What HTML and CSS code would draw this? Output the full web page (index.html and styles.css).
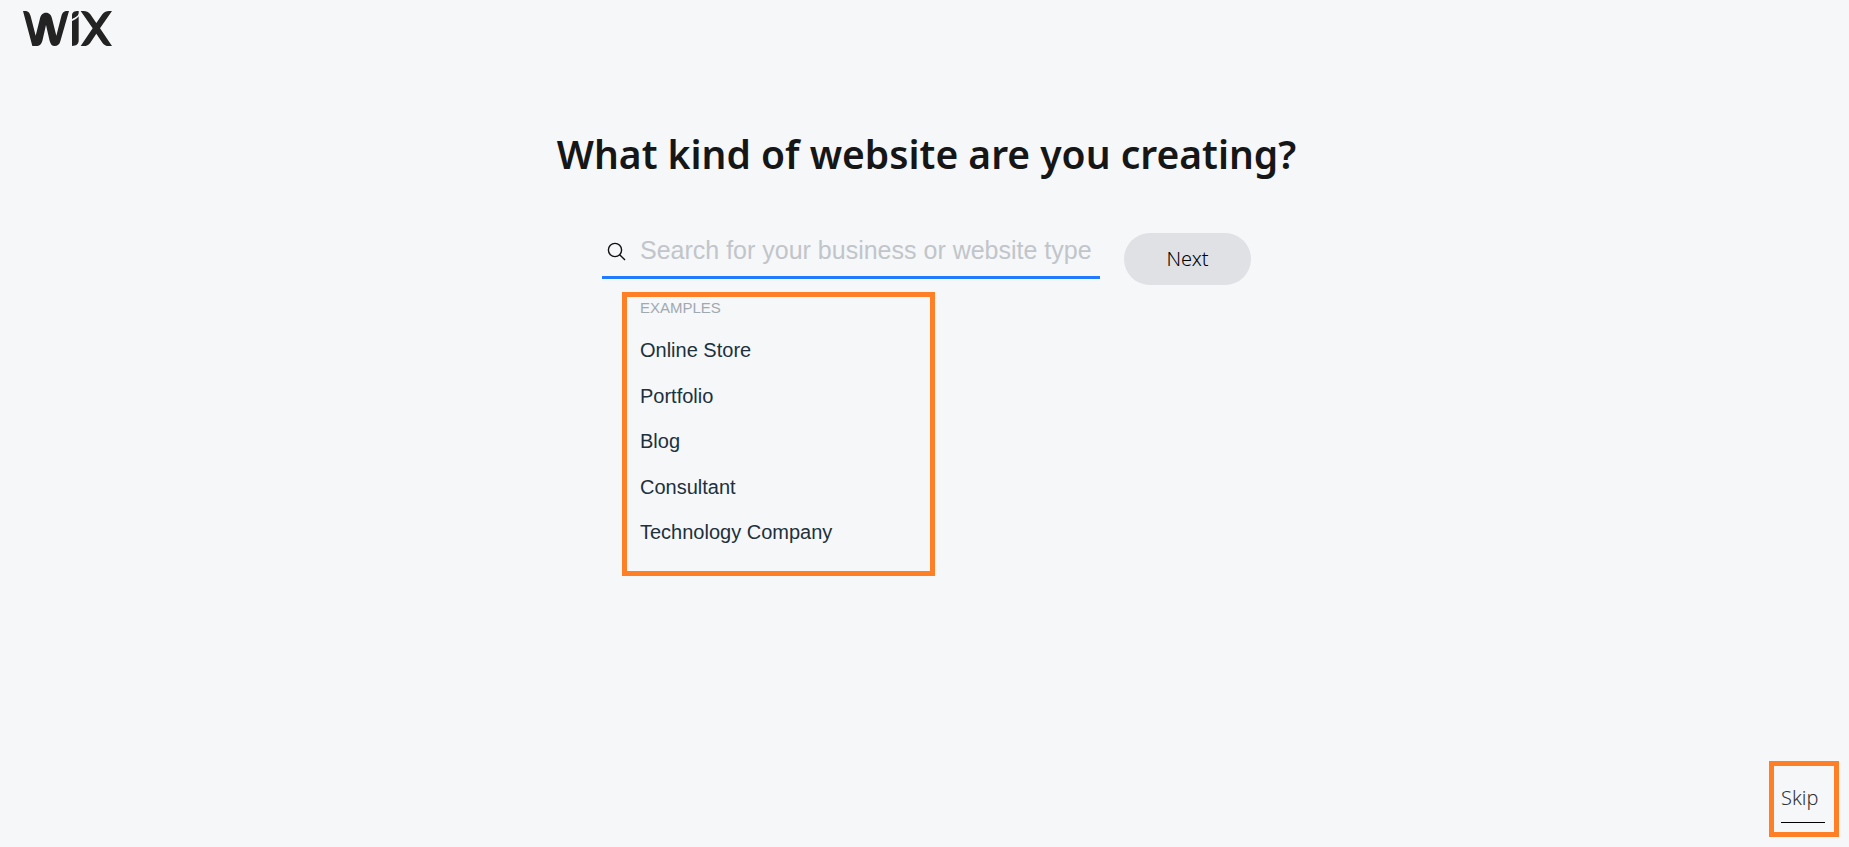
FILE: index.html
```
<!DOCTYPE html>
<html lang="en">
<head>
    <meta charset="UTF-8">
    <meta name="viewport" content="width=device-width, initial-scale=1.0">
    <title>What kind of website are you creating?</title>
    <link rel="stylesheet" href="styles.css">
</head>
<body>

<header class="header">
    <a href="#" class="logo" aria-label="Wix">
        <svg viewBox="0 0 267 105" width="89" height="35" fill="#242323">
            <path d="M0 0H5C16 0 20 5 23 16L38 74L50 26C53 11 59 5 69 5C79 5 85 11 88 26L100 74L115 16C118 5 122 0 133 0H138L112 91C109 101 104 105 95 105C86 105 83 99 80 90L69 42L58 90C55 99 51 104 43 105H28Z"/>
            <path d="M147 25V14C147 4 153 0 167 0C168 11 164 15 157 19C152 22 149 23 147 25Z"/>
            <path d="M147 30C156 27 162 23 167 16V88C167 100 160 105 147 105Z"/>
            <path d="M173 0H182C190 0 196 2 202 10L220 36L238 10C244 2 250 0 258 0H267L231 52L267 105H257C249 105 243 102 238 95L220 68L202 95C197 102 191 105 183 105H173L209 52Z"/>
        </svg>
    </a>
</header>

<main class="main">
    <h1 class="title">What kind of website are you creating?</h1>

    <form class="search-form">
        <div class="search-field">
            <label for="search" class="search-label" aria-label="Website type">
                <svg viewBox="0 0 20 20" width="20" height="20" fill="none" stroke="#111" stroke-width="1.4">
                    <circle cx="8" cy="8" r="6.6"/>
                    <path d="M12.7 12.7L18 18"/>
                </svg>
            </label>
            <input type="text" id="search" class="search-input" placeholder="Search for your business or website type">
        </div>
        <button type="button" class="next-button">Next</button>
    </form>

    <section class="examples">
        <h2 class="examples-title">EXAMPLES</h2>
        <ul class="examples-list">
            <li><a href="#">Online Store</a></li>
            <li><a href="#">Portfolio</a></li>
            <li><a href="#">Blog</a></li>
            <li><a href="#">Consultant</a></li>
            <li><a href="#">Technology Company</a></li>
        </ul>
    </section>
</main>

<footer class="footer">
    <div class="skip-box">
        <a href="#" class="skip-link">Skip</a>
    </div>
</footer>

</body>
</html>
```
FILE: styles.css
```
* {
    box-sizing: border-box;
}
body {
    margin: 0;
    min-height: 100vh;
    display: flex;
    flex-direction: column;
    background-color: #f5f7f9;
    color: #161616;
    font-family: "Liberation Sans", Arial, sans-serif;
}
.header {
    padding: 11px 23px 0;
}
.logo,
.logo svg {
    display: block;
    width: 89px;
}
.main {
    flex: 1;
    display: flex;
    flex-direction: column;
    align-items: center;
    padding: 80px 0 20px 4px;
}
.title {
    margin: 0;
    font-family: "Noto Sans", sans-serif;
    font-size: 39px;
    font-weight: 600;
    line-height: 56px;
    text-align: center;
}
.search-form {
    display: flex;
    align-items: flex-start;
    gap: 24px;
    width: 100%;
    max-width: 649px;
    margin-top: 51px;
}
.search-field {
    flex: 1;
    display: flex;
    align-items: center;
    height: 46px;
    border-bottom: 3px solid #217aff;
}
.search-label {
    width: 38px;
    padding-left: 5px;
}
.search-label svg {
    display: block;
    margin-top: -6px;
}
.search-input {
    flex: 1;
    min-width: 0;
    padding: 0 0 8px;
    border: none;
    outline: none;
    background: none;
    color: #20303c;
    font-family: inherit;
    font-size: 25px;
}
.search-input::placeholder {
    color: #c1c5c9;
}
.next-button {
    width: 127px;
    height: 52px;
    padding-bottom: 3px;
    border: none;
    border-radius: 26px;
    background-color: #e0e1e5;
    color: #000;
    font-family: "Noto Sans", sans-serif;
    font-size: 20px;
    font-weight: 300;
    cursor: pointer;
}
.examples {
    display: flex;
    flex-direction: column;
    width: 313px;
    min-height: 284px;
    margin: 7px 296px 0 0;
    padding: 1px 13px 0;
    border: 5px solid #ff7f27;
}
.examples-title {
    margin: 0;
    color: #a1a9b0;
    font-size: 15px;
    font-weight: normal;
    line-height: 20px;
}
.examples-list {
    flex: 1;
    display: flex;
    flex-direction: column;
    justify-content: space-between;
    margin: 0;
    padding: 20px 0 27px;
    list-style: none;
    font-size: 20px;
    line-height: 24px;
}
.examples-list a {
    color: #20303c;
    text-decoration: none;
}
.footer {
    display: flex;
    justify-content: flex-end;
    padding: 0 10px 10px;
}
.skip-box {
    width: 70px;
    height: 76px;
    padding: 20px 7px 0;
    border: 5px solid #ff7f27;
}
.skip-link {
    display: block;
    width: 44px;
    height: 37px;
    border-bottom: 1px solid #000;
    color: #333;
    font-family: "Noto Sans", sans-serif;
    font-size: 20px;
    font-weight: 300;
    line-height: 24px;
    text-decoration: none;
}
```
